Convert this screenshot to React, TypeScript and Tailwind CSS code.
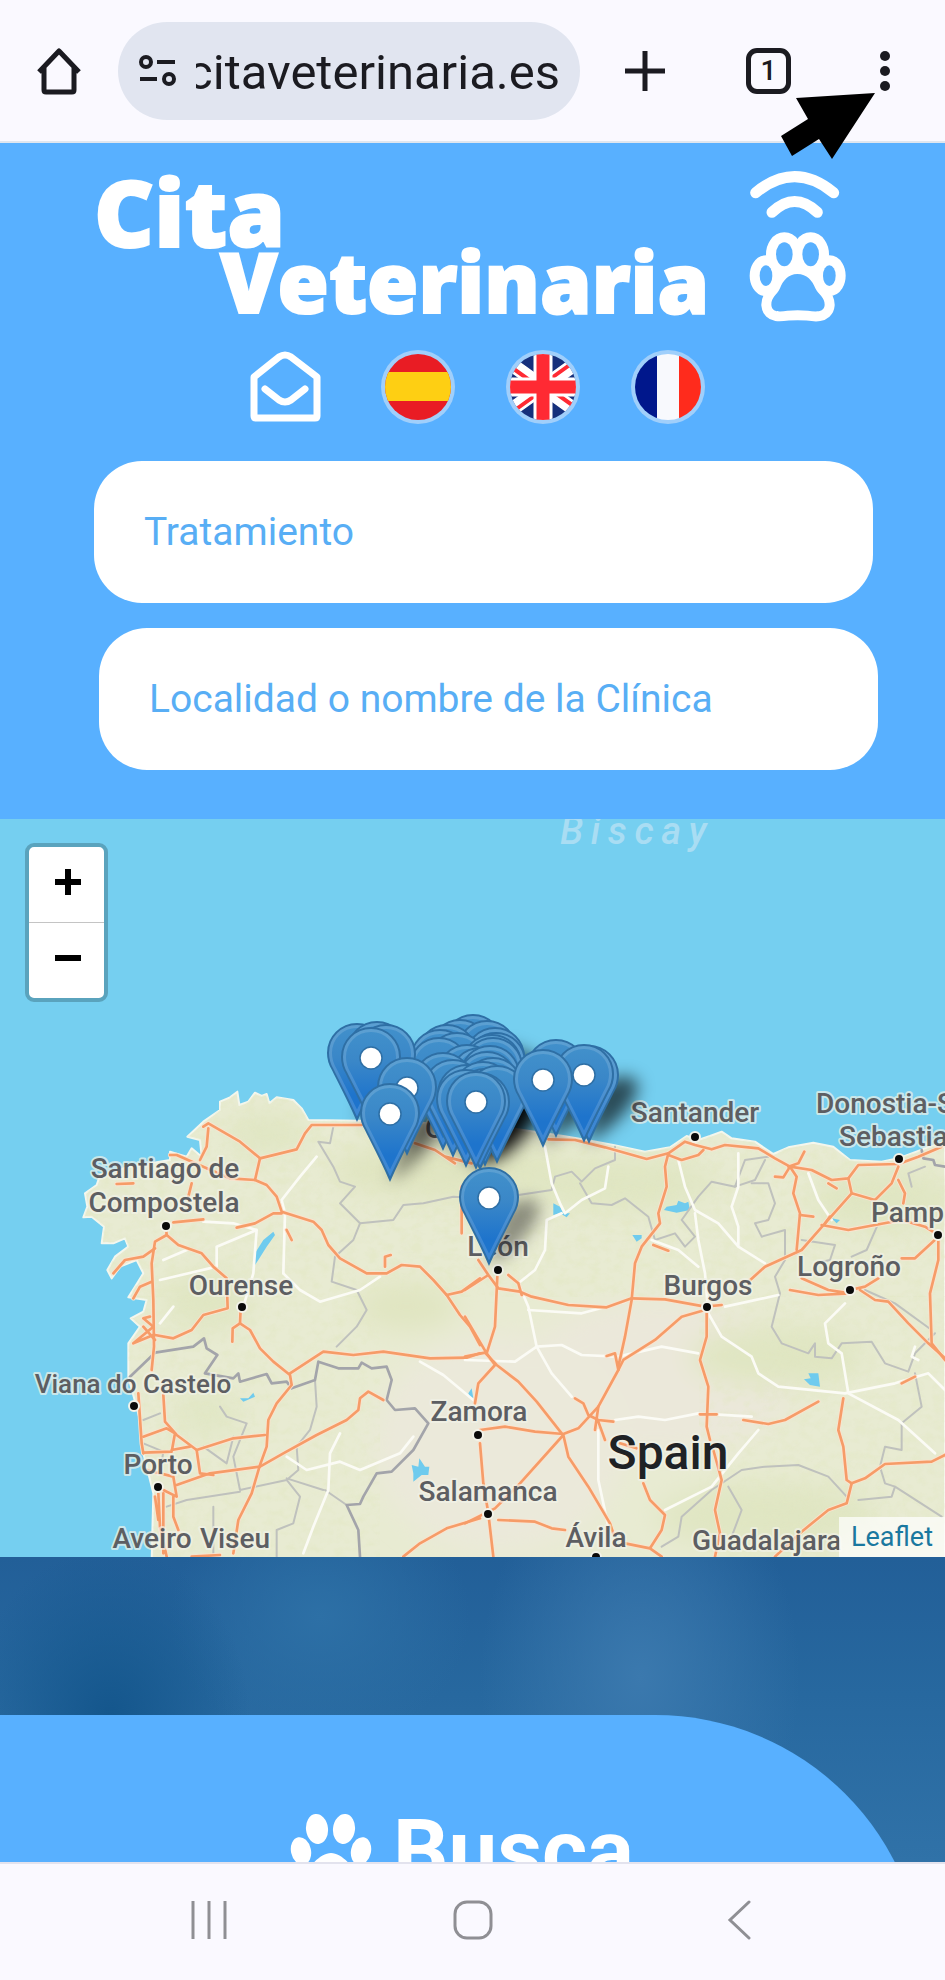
import type { ReactNode } from "react";

type Point = [number, number];

interface Town {
  name: string;
  x: number;
  y: number;
  anchor?: "start" | "middle";
}

const towns: Town[] = [
  { name: "Oviedo", x: 425, y: 319, anchor: "start" },
  { name: "Santiago de", x: 165, y: 359 },
  { name: "Compostela", x: 164, y: 393 },
  { name: "Ourense", x: 241, y: 476 },
  { name: "Porto", x: 158, y: 655 },
  { name: "Aveiro", x: 152, y: 729 },
  { name: "Viseu", x: 235, y: 729 },
  { name: "Santander", x: 695, y: 303 },
  { name: "Donostia-S", x: 816, y: 294, anchor: "start" },
  { name: "Sebastia", x: 839, y: 327, anchor: "start" },
  { name: "Pamp", x: 871, y: 403, anchor: "start" },
  { name: "Logroño", x: 849, y: 457 },
  { name: "Burgos", x: 708, y: 476 },
  { name: "León", x: 498, y: 437 },
  { name: "Zamora", x: 479, y: 602 },
  { name: "Salamanca", x: 488, y: 682 },
  { name: "Ávila", x: 596, y: 728 },
  { name: "Guadalajara", x: 692, y: 731, anchor: "start" },
];

const townDots: Point[] = [
  [166, 407], [242, 488], [134, 587], [158, 668], [695, 318], [899, 340],
  [938, 416], [850, 471], [707, 488], [498, 451], [478, 616], [488, 695],
  [596, 738],
];

// tips of the clinic markers, back to front
const pins: Point[] = [
  [473, 293], [460, 298], [487, 299], [447, 303], [495, 306], [440, 308],
  [496, 311], [457, 311], [492, 313], [439, 316], [493, 316], [467, 323],
  [480, 326], [490, 324], [443, 331], [487, 330], [493, 336], [453, 338],
  [467, 343], [483, 340], [485, 347], [466, 348], [497, 344], [480, 351],
  [476, 350],
  [357, 302], [377, 300], [386, 303], [371, 306], [407, 336], [390, 362],
  [556, 318], [589, 324], [584, 323], [543, 328], [489, 446],
];

const LAND =
  "M455 1500 460 1300 430 1180 420 1080 385 950 385 850 420 800 392 775 430 755 440 720 385 712 405 680 430 640 410 600 360 620 335 655 322 630 345 590 385 560 375 535 340 550 305 550 312 500 275 470 250 472 262 440 255 400 290 375 300 345 390 320 510 300 510 275 560 290 575 265 605 290 600 240 562 230 610 185 660 150 660 125 690 112 712 95 718 135 745 125 765 98 785 108 800 102 808 130 830 112 880 120 905 145 925 180 1080 182 1300 190 1500 200 1690 228 1760 240 1840 255 1935 275 2010 262 2060 228 2095 240 2130 228 2165 215 2195 235 2265 245 2320 282 2365 262 2440 248 2500 260 2550 300 2645 305 2695 295 2775 265 2835 245 2835 1500Z";

const westOrange = [
  "M610 200 625 190 720 245 780 295 890 268 915 220 935 195 1085 195",
  "M780 295 765 360 690 355 620 325 530 285 510 285",
  "M625 205 620 260 600 300",
  "M765 360 800 375 830 410 845 455 940 485 965 510 985 555 1020 595 1100 640 1160 640 1205 615 1260 620 1300 660 1340 705 1385 695 1440 655",
  "M1340 705 1380 765 1410 800 1440 855",
  "M710 503 765 490 820 460 845 460",
  "M575 370 565 410M350 372 400 370M520 487 610 478",
  "M498 500 500 525 535 555 605 580 640 620 680 655 683 745 610 765 575 810 520 835 465 825",
  "M500 525 465 545 455 610 460 720 462 860 455 930",
  "M465 565 430 590 375 600 340 640M455 665 420 680 400 715M450 770 430 775 460 800 400 850 460 825M430 800 465 840",
  "M722 745 720 790 750 810 780 865 820 905 870 945 875 975 830 1030 805 1080 800 1160 780 1215 755 1300 715 1380 700 1480",
  "M720 790 698 805 697 845M860 510 875 540M1155 620 1155 590 1172 585",
  "M870 940 970 875 1060 885 1150 875 1290 895 1400 893 1440 880",
  "M1150 1020 1105 995 1080 1015 1075 1050 1040 1080 950 1125 850 1180 780 1220 630 1240 530 1275",
  "M415 1000 425 1150 430 1180M490 1005 495 1085 530 1125 590 1170 700 1135 795 1125",
  "M430 1130 500 1105 525 1120 515 1175 430 1178M590 1170 600 1240 640 1245M570 1160 515 1170",
  "M475 1300 480 1400 500 1490M465 1310 475 1380M490 1300 490 1480M520 1310 520 1370 535 1410M440 1230 520 1250 530 1310 490 1290M575 1490 660 1485",
  "M1210 1490 1260 1450 1340 1405 1440 1375",
];

const eastOrange = [
  "M-150 250 -90 270 -30 310M-10 380 -10 520M-60 290 20 310",
  "M250 238 330 240 420 262 545 297 610 280 660 245 690 255 740 268 780 255 880 265 930 295 975 320 1040 330 1100 360 1150 355 1180 315 1300 312 1360 290 1430 260",
  "M610 280 600 320 605 380 580 460 585 490 530 560 510 610 500 720 480 830 460 920",
  "M610 285 650 300 700 285 715 270M970 320 1000 310 1018 275M930 350 955 352 975 320 995 350 985 400 1005 460 995 570",
  "M1150 355 1160 400 1080 490 1045 530 1010 570 900 620 850 665M1160 400 1230 420 1280 370 1300 320M1300 360 1320 400 1315 430",
  "M1070 495 1150 510 1230 495 1310 480 1380 500 1420 525 1420 600 1395 700 1400 850 1440 900M1420 530 1350 595 1310 595",
  "M1005 465 1045 470M1090 370 1115 385M1095 470 1080 490",
  "M0 690 70 645 40 600M70 645 100 685 165 695 200 710 310 735 425 742 500 715 600 718 720 740",
  "M130 645 160 670 170 705M97 650 90 800 65 880 0 770M0 890 60 878 95 915 160 965 215 1025 290 1120",
  "M65 880 90 915 40 970 30 1030M45 1110 120 1100 210 1115 295 1122 340 1105 400 1040 460 930 475 900 570 840 650 770 720 750",
  "M295 1125 165 1270 90 1345 0 1390M295 1125 310 1190 370 1280 435 1390 445 1420",
  "M45 1150 55 1270 70 1360 85 1490M100 1380 210 1385 260 1405 300 1410M460 930 450 880 425 888",
  "M330 1015 355 1030 370 1065 400 1080 445 1085M400 1040 390 1110M400 1085 420 1140",
  "M725 760 725 830 705 900 730 980 725 1100 735 1140M705 1063 755 1063M745 1170 770 1260 750 1350 765 1420 750 1490",
  "M535 1270 555 1320 600 1365 590 1410 555 1465 480 1450M555 1465 590 1490M465 1150 515 1165",
  "M835 1080 910 1092 960 1080 1060 1025M1310 970 1350 950M1135 1015 1120 1110 1135 1160 1145 1260 1160 1270 1200 1255 1260 1212 1400 1205 1440 1185",
  "M1160 1270 1145 1330 1090 1350 1010 1415 930 1490M1185 690 1230 720 1270 725 1330 790 1390 850 1440 895",
  "M975 690 1060 705 1155 700 1090 690 1010 655M1155 690 1200 680 1240 655M565 555 610 572M720 740 770 735",
];

const westWhite = [
  "M950 290 900 350 845 420 855 460 850 640M770 510 650 560 650 620 480 660M610 485 700 490 770 510 760 640 730 740",
  "M490 600 560 570M850 640 900 690 960 725 1080 690 1140 650M1260 905 1330 945 1420 1020",
  "M1020 1120 990 1180 985 1290 940 1400 910 1480M860 1190 920 1230 1020 1205 1080 1230 1200 1180 1240 1130M480 790 520 740",
];

const eastWhite = [
  "M240 260 260 370 285 430 300 460 350 420 420 385 430 320M290 460 245 480 240 570 210 630 160 670 190 740 215 860 260 940 320 1010",
  "M640 300 660 380 690 450 760 490 820 560 900 610M820 280 820 380 800 440 820 500 820 560M690 460 700 540 720 640 730 760 770 830 860 890 880 940 940 980 1140 1000 1290 970 1390 940 1440 990",
  "M0 900 150 905 215 860 290 855 350 885 460 890 590 860 700 880M190 750 350 760 480 725M450 1080 520 1070 600 1080 700 1060 860 1070M1140 730 1080 790 1090 850 1130 880 1150 1000 1300 1080 1410 1180",
  "M780 740 940 705M600 1350 740 1280 820 1180 880 1110M400 1110 400 1260 430 1400M1350 860 1340 890 1360 900M1030 340 1060 420 1100 480M560 540 640 570 700 620",
];

const westGrey = [
  "M1000 200 990 250 955 245 1000 320 1020 365 1065 380 1020 430 1080 490 1060 540 1005 590 995 665 1070 690 1100 750 1070 800 1010 860",
  "M1080 490 1180 480 1210 435 1270 430 1360 410 1440 415",
  "M945 960 950 1040 930 1110 890 1160 895 1230 860 1260 720 1290 700 1190 740 1090 680 1070 660 1040M970 1290 860 1255M610 1160 680 1210 700 1130M975 1290 1040 1335M500 1340 560 1320 720 1295M640 1490 640 1340M830 1490 830 1410 880 1390 900 1310 860 1260M430 1080 480 1060M430 1150 490 1175 480 1240",
];

const eastGrey = [
  "M160 405 260 390 270 350 320 335 350 365 390 325 450 300 450 260M345 370 380 430 440 435 480 415 550 470 570 540 630 520 660 560 690 530 650 480 700 410 740 365 810 380 840 300 910 290M860 370 910 370 930 430 910 480 870 490 890 530 960 510 960 590 1000 580",
  "M810 380 870 360 900 300M960 600 930 650 945 700 920 800 950 850 1030 880 1050 850 1050 890 1100 895 1130 850 1220 845 1260 910 1330 935 1350 880 1410 820",
  "M1010 540 1110 555 1095 600 1050 610M1240 490 1205 570 1160 590M1200 690 1290 730 1400 810M1340 380 1330 340 1380 320M1350 940 1370 1040 1310 1090 1310 1170 1260 1160 1245 1220 1260 1270 1290 1280 1280 1310 1180 1320M1290 1280 1430 1370",
  "M590 1460 640 1430 650 1370 740 1290 830 1230 900 1220 1000 1215 1090 1250 1145 1310M790 1280 830 1350 800 1430",
];

const BORDER =
  "M390 950 465 878 580 860 612 835 620 865 652 885 615 940 700 955 715 940 720 965 800 942 815 970 860 965 875 985 945 960 955 905 1015 925 1075 925 1085 908 1115 925 1160 920 1175 960 1160 1020 1185 1050 1245 1045 1285 1090 1240 1170 1175 1235 1130 1240 1090 1310 1080 1332 1040 1335 1075 1410 1080 1490";

const LAKES =
  "M765 615 765 580 790 540 820 515 825 525 800 560 775 600ZM720 1015 745 1015 760 998 765 1010 730 1025ZM1240 1240 1235 1215 1255 1220 1258 1195 1275 1220 1288 1220 1285 1245 1265 1245 1240 1265ZM1405 1000 1415 985 1420 1015 1408 1010Z" +
  "M1992 450 2000 440 2030 435 2035 422 2055 430 2065 425 2070 450 2030 458ZM1897 525 1925 525 1925 535 1910 545ZM1660 430 1680 440 1690 460 1710 460 1700 472 1680 460 1660 465ZM2412 958 2432 955 2425 940 2455 940 2460 980 2430 975ZM2495 475 2520 480 2510 490Z";

const RoadGroup = ({
  paths,
  stroke,
  width,
}: {
  paths: string[];
  stroke: string;
  width: number;
}) => (
  <g
    fill="none"
    stroke={stroke}
    strokeWidth={width}
    strokeLinejoin="round"
    strokeLinecap="round"
  >
    {paths.map((d) => (
      <path key={d} d={d} />
    ))}
  </g>
);

const ClinicMap = () => (
  <svg
    className="block w-full h-[738px]"
    viewBox="0 0 945 738"
    preserveAspectRatio="xMidYMid slice"
    role="img"
    aria-label="Mapa de clínicas"
  >
    <defs>
      <linearGradient id="pinFill" x1="0" y1="0" x2="0" y2="1">
        <stop offset="0" stopColor="#4291cb" />
        <stop offset="0.35" stopColor="#3a87c8" />
        <stop offset="0.75" stopColor="#1e74cc" />
      </linearGradient>
      <filter id="soft" x="-50%" y="-50%" width="200%" height="200%">
        <feGaussianBlur stdDeviation="8" />
      </filter>
      <filter id="haze" x="-50%" y="-50%" width="200%" height="200%">
        <feGaussianBlur stdDeviation="40" />
      </filter>
      <filter id="relief" x="0" y="0" width="100%" height="100%">
        <feTurbulence type="fractalNoise" baseFrequency="0.03 0.04" numOctaves="3" seed="4" />
        <feColorMatrix values="0 0 0 0 0.76  0 0 0 0 0.8  0 0 0 0 0.54  3 0 0 0 -1.3" />
      </filter>
      <clipPath id="landClip">
        <path d={LAND} />
      </clipPath>
      <g id="pin">
        <path
          d="M0-1.5C-8-20-17-37-24.500-52-27.500-57-29-62.500-29-68-29-84-16-97-0-97 16-97 29-84 29-68 29-62.500 27.500-57 24.500-52 17-37 8-20 0-1.500Z"
          fill="url(#pinFill)"
          stroke="#2e6fa5"
          strokeWidth="2"
        />
        <path
          d="M0-8C-7-23-15-38-22-52-25-57-26.500-63-26.500-68-26.500-83-15-94.500 0-94.500 15-94.500 26.500-83 26.500-68 26.500-63 25-57 22-52 15-38 7-23 0-8Z"
          fill="none"
          stroke="#fff"
          strokeOpacity="0.14"
          strokeWidth="3"
        />
        <circle cy="-67" r="11" fill="#fff" stroke="#2e6fa5" strokeWidth="1.500" />
      </g>
      <path
        id="pinShadow"
        d="M0 0 14-50C24-66 44-72 50-60 54-46 30-16 0 0Z"
        fill="#000"
        fillOpacity="0.4"
      />
    </defs>

    <rect width="945" height="738" fill="#75cff0" />
    <g transform="translate(0 241) scale(0.33333)">
      <path d={LAND} fill="#e8ebd2" stroke="#f4f7ee" strokeWidth="6" strokeLinejoin="round" />
      <g clipPath="url(#landClip)">
        <g filter="url(#haze)">
          <ellipse cx="1980" cy="950" rx="420" ry="230" fill="#ebe8da" />
          <ellipse cx="1500" cy="1150" rx="380" ry="330" fill="#ebe9da" />
          <ellipse cx="1350" cy="330" rx="360" ry="90" fill="#e0e5c1" />
          <ellipse cx="1220" cy="740" rx="150" ry="70" fill="#e0e5c1" />
          <ellipse cx="1850" cy="370" rx="300" ry="80" fill="#e0e6c3" />
          <ellipse cx="2330" cy="890" rx="260" ry="90" fill="#e0e6c2" />
          <ellipse cx="2650" cy="420" rx="220" ry="90" fill="#e0e6c3" />
          <ellipse cx="2300" cy="1370" rx="330" ry="100" fill="#e0e6c3" />
          <ellipse cx="620" cy="720" rx="130" ry="90" fill="#e0e6c3" />
          <ellipse cx="620" cy="1060" rx="100" ry="70" fill="#e1e7c6" />
          <ellipse cx="800" cy="220" rx="120" ry="60" fill="#e0e6c3" />
        </g>
        <rect x="240" y="90" width="2600" height="620" filter="url(#relief)" opacity="0.45" />
        <rect x="240" y="710" width="900" height="800" filter="url(#relief)" opacity="0.4" />
        <rect x="2100" y="710" width="740" height="800" filter="url(#relief)" opacity="0.35" />
      </g>
      <path d={LAKES} fill="#6fcbee" />
      <RoadGroup paths={westGrey} stroke="#bfc1bd" width={6} />
      <RoadGroup paths={[BORDER]} stroke="#a3a4aa" width={8} />
      <RoadGroup paths={westWhite} stroke="#fbfbf5" width={8} />
      <RoadGroup paths={westOrange} stroke="#fbe3cf" width={13} />
      <g transform="translate(1395 0)">
        <RoadGroup paths={eastGrey} stroke="#bfc1bd" width={6} />
        <RoadGroup paths={["M1370 270 1375 295 1405 300 1410 315 1440 320"]} stroke="#a3a4aa" width={8} />
        <RoadGroup paths={eastWhite} stroke="#fbfbf5" width={8} />
        <RoadGroup paths={eastOrange} stroke="#fbe3cf" width={13} />
        <RoadGroup paths={eastOrange} stroke="#f69c68" width={8} />
      </g>
      <RoadGroup paths={westOrange} stroke="#f69c68" width={8} />
    </g>

    <text
      x="560"
      y="25"
      className="font-[Roboto,sans-serif] text-[38px] font-medium italic tracking-[0.2em] fill-[#a9ddf3]"
    >
      Biscay
    </text>
    {townDots.map(([x, y]) => (
      <circle key={`${x}-${y}`} cx={x} cy={y} r="5" fill="#0a0a0a" stroke="#f3f3ea" strokeWidth="2" />
    ))}
    <g
      className="font-[Roboto,sans-serif] text-[28px] font-medium fill-[#5d5e62]"
      stroke="#f1f2e8"
      strokeOpacity="0.7"
      strokeWidth="4"
      strokeLinejoin="round"
      paintOrder="stroke"
    >
      {towns.map(({ name, x, y, anchor = "middle" }) => (
        <text key={name} x={x} y={y} textAnchor={anchor}>
          {name}
        </text>
      ))}
      <text x="133" y="574" textAnchor="middle" className="text-[26px]">
        Viana do Castelo
      </text>
      <text
        x="668"
        y="650"
        textAnchor="middle"
        className="text-[48px] fill-[#1f2225]"
      >
        Spain
      </text>
    </g>

    <g filter="url(#soft)">
      {pins.map(([x, y]) => (
        <use key={`${x}-${y}`} href="#pinShadow" x={x} y={y} />
      ))}
    </g>
    {pins.map(([x, y]) => (
      <use key={`${x}-${y}`} href="#pin" x={x} y={y} />
    ))}
  </svg>
);

const BrowserBar = () => (
  <header className="relative flex items-center h-[143px] pl-[36px] pr-[37px] bg-[#faf9ff] border-b-2 border-[#dfe6ef] text-[#1b1b21]">
    <button type="button" aria-label="Inicio" className="shrink-0">
      <svg className="w-[46px] h-[48px]" viewBox="0 0 46 48" fill="none" stroke="currentColor" strokeWidth="5" strokeLinejoin="round">
        <path d="M3 25 23 4 43 25M8 21V43Q8 45 10 45H36Q38 45 38 43V21" />
      </svg>
    </button>
    <div className="flex items-center flex-1 min-w-0 h-[98px] ml-[36px] px-[20px] gap-[19px] rounded-full bg-[#e1e5f0]">
      <svg className="shrink-0 w-[39px] h-[34px]" viewBox="0 0 39 34" fill="none" stroke="currentColor" strokeWidth="4">
        <circle cx="8" cy="8" r="5" />
        <path d="M19 8H37M2 25H19" />
        <circle cx="31" cy="25" r="5" />
      </svg>
      <div className="flex flex-1 min-w-0 justify-end pt-[4px] overflow-hidden">
        <input
          aria-label="Dirección"
          defaultValue="citaveterinaria.es"
          className="w-[390px] shrink-0 bg-transparent outline-none text-right text-[49px] leading-[60px]"
        />
      </div>
    </div>
    <div className="flex items-center justify-between shrink-0 w-[328px] pl-[45px]">
      <button type="button" aria-label="Nueva pestaña">
        <svg className="w-[40px] h-[40px]" viewBox="0 0 40 40" stroke="currentColor" strokeWidth="5">
          <path d="M20 0V40M0 20H40" />
        </svg>
      </button>
      <button
        type="button"
        aria-label="Pestañas"
        className="flex items-center justify-center w-[45px] h-[46px] ml-[10px] rounded-[11px] border-[5px] border-current text-[28px] font-medium"
      >
        1
      </button>
      <button type="button" aria-label="Menú" className="px-[17px]">
        <svg className="w-[12px] h-[42px]" viewBox="0 0 12 42" fill="currentColor">
          <circle cx="6" cy="6" r="5" />
          <circle cx="6" cy="21" r="5" />
          <circle cx="6" cy="36" r="5" />
        </svg>
      </button>
    </div>
    <svg className="absolute right-[69px] top-[92px] z-10 w-[96px] h-[68px]" viewBox="781 92 96 68">
      <path d="M876 93 797 98 809 119 782 136 793 156 820 139 833 159Z" fill="#000" />
    </svg>
  </header>
);

const Flag = ({ label, children }: { label: string; children: ReactNode }) => (
  <button type="button" aria-label={label}>
    <svg className="w-[76px] h-[76px]" viewBox="-38 -38 76 76">
      <circle r="37" fill="#a0cffb" />
      <g clipPath="url(#flagClip)">{children}</g>
    </svg>
  </button>
);

const Languages = () => (
  <div className="flex items-center ml-[248px] mt-[26px] h-[76px]">
    <svg className="absolute w-0 h-0">
      <clipPath id="flagClip">
        <circle r="33" />
      </clipPath>
    </svg>
    <a href="#contacto" aria-label="Contacto" className="mr-[57px]">
      <svg className="w-[75px] h-[76px]" viewBox="0 0 75 76" fill="none" stroke="#fff" strokeWidth="7" strokeLinejoin="round" strokeLinecap="round">
        <path d="M6 28 31 8Q37 4 43 8L69 28V67Q69 69 67 69H8Q6 69 6 67Z" />
        <path d="M17 40 31 51Q37 55 43 51L57 40" />
      </svg>
    </a>
    <div className="flex gap-[49px]">
      <Flag label="Español">
        <rect x="-33" y="-33" width="66" height="66" fill="#e91c24" />
        <rect x="-33" y="-15" width="66" height="29" fill="#fecf13" />
      </Flag>
      <Flag label="English">
        <rect x="-33" y="-33" width="66" height="66" fill="#16307c" />
        <path d="M-46-33 46 33M46-33-46 33" stroke="#fff" strokeWidth="14" />
        <path d="M-46-30-4 0M46 30 4 0M-46 36 4 0M46-36-4 0" stroke="#ff2a33" strokeWidth="4" />
        <path d="M0-33V33M-33 0H33" stroke="#fff" strokeWidth="19" />
        <path d="M0-33V33M-33 0H33" stroke="#ff2a33" strokeWidth="13" />
      </Flag>
      <Flag label="Français">
        <rect x="-33" y="-33" width="22" height="66" fill="#00178c" />
        <rect x="-11" y="-33" width="22" height="66" fill="#f8f9fd" />
        <rect x="11" y="-33" width="22" height="66" fill="#ff2b1c" />
      </Flag>
    </div>
  </div>
);

const PAD =
  "M175 342C148 342 132 362 123 385 115 404 96 412 97 435 99 459 125 455 145 452Q176 449 207 452C227 455 255 459 257 435 258 412 238 404 229 385 220 362 204 342 175 342Z";

const PawShapes = () => (
  <>
    <ellipse cx="136" cy="283" rx="25" ry="36" />
    <ellipse cx="215" cy="283" rx="25" ry="36" />
    <ellipse cx="81" cy="347" rx="19" ry="31" />
    <ellipse cx="271" cy="347" rx="19" ry="31" />
    <path d={PAD} />
  </>
);

const Logo = () => (
  <div className="flex pt-[26px] pl-[94px]">
    <h1 className="w-[655px] font-['Open_Sans',sans-serif] font-extrabold text-white whitespace-nowrap [-webkit-text-stroke:2px_white]">
      <span className="block text-[93px] leading-[84px]">Cita</span>
      <span className="block pl-[126px] text-[83px] leading-[56px]">Veterinaria</span>
    </h1>
    <svg className="w-[98px] h-[154px]" viewBox="30 27 294 462" fill="none">
      <g stroke="#fff" strokeWidth="33" strokeLinecap="round">
        <path d="M50 98Q167 2 284 98" />
        <path d="M99 157Q167 92 235 157" />
      </g>
      <g stroke="#fff" strokeWidth="60" strokeLinejoin="round">
        <PawShapes />
      </g>
      <g fill="#58b0ff">
        <PawShapes />
      </g>
    </svg>
  </div>
);

const searchInput =
  "block h-[142px] px-[50px] rounded-[48px] bg-white outline-none text-[39px] text-[#58aef5] placeholder:text-[#58aef5] placeholder:opacity-100";

const App = () => (
  <div className="font-[Roboto,sans-serif] bg-[#faf9ff] overflow-hidden">
    <BrowserBar />

    <section className="h-[676px] bg-[#58b0ff]">
      <Logo />
      <Languages />
      <form className="mt-[36px] pl-[94px] pr-[67px] space-y-[25px]">
        <input aria-label="Tratamiento" placeholder="Tratamiento" className={`${searchInput} w-[calc(100%-5px)]`} />
        <input
          aria-label="Localidad o nombre de la Clínica"
          placeholder="Localidad o nombre de la Clínica"
          className={`${searchInput} ml-[5px] w-[calc(100%-5px)]`}
        />
      </form>
    </section>

    <section className="relative">
      <ClinicMap />
      <div className="absolute left-[25px] top-[24px] flex flex-col rounded-[9px] border-[4px] border-[#5aa3bd] bg-white overflow-hidden">
        <button type="button" aria-label="Acercar" className="flex items-center justify-center w-[75px] h-[76px] border-b border-[#c4c4c4] pb-[6px] pl-[3px]">
          <svg className="w-[28px] h-[28px]" viewBox="0 0 28 28" stroke="#000" strokeWidth="6">
            <path d="M14 1V27M1 14H27" />
          </svg>
        </button>
        <button type="button" aria-label="Alejar" className="flex items-center justify-center w-[75px] h-[75px] pb-[6px] pl-[3px]">
          <svg className="w-[28px] h-[28px]" viewBox="0 0 28 28" stroke="#000" strokeWidth="6">
            <path d="M1 14H27" />
          </svg>
        </button>
      </div>
      <a
        href="#leaflet"
        className="absolute right-0 bottom-0 px-[12px] bg-white/70 text-[27px] leading-[40px] text-[#1a789f]"
      >
        Leaflet
      </a>
    </section>

    <section className="h-[305px] pt-[158px] overflow-hidden bg-[radial-gradient(ellipse_140px_170px_at_110px_160px,#14568c_0%,transparent_100%),radial-gradient(ellipse_160px_220px_at_640px_120px,#3b79ae_0%,transparent_100%),radial-gradient(ellipse_150px_130px_at_320px_60px,#2d70a6_0%,transparent_100%),linear-gradient(180deg,#225f98_0%,#27689f_45%,#3072a8_100%)]">
      <div className="flex justify-center gap-[21px] h-[300px] mr-[21px] pt-[98px] rounded-tr-[269px] bg-[#58b0ff] text-white">
        <svg className="w-[82px] h-[82px]" viewBox="0 0 82 82" fill="currentColor">
          <ellipse cx="27" cy="16" rx="11" ry="15" transform="rotate(-7 27 16)" />
          <ellipse cx="54" cy="16" rx="11" ry="15" transform="rotate(7 54 16)" />
          <ellipse cx="11" cy="38" rx="10" ry="14" transform="rotate(-12 11 38)" />
          <ellipse cx="71" cy="38" rx="10" ry="14" transform="rotate(12 71 38)" />
          <path d="M41 40C30 40 15 56 15 68 15 82 32 76 41 76S67 82 67 68C67 56 52 40 41 40Z" />
        </svg>
        <h2 className="text-[87px] leading-[76px] font-bold">Busca</h2>
      </div>
    </section>

    <nav className="flex items-center h-[118px] pl-[191px] pr-[194px] pb-[4px] justify-between border-t-2 border-[#e3e3ee] bg-[#faf9ff]">
      <button type="button" aria-label="Recientes">
        <svg className="w-[36px] h-[40px]" viewBox="0 0 36 40" stroke="#8f8f94" strokeWidth="3">
          <path d="M2 1V39M18 1V39M34 1V39" />
        </svg>
      </button>
      <button type="button" aria-label="Inicio del sistema">
        <svg className="w-[40px] h-[40px]" viewBox="0 0 40 40" fill="none" stroke="#8f8f94" strokeWidth="3">
          <rect x="2" y="2" width="36" height="36" rx="12" />
        </svg>
      </button>
      <button type="button" aria-label="Atrás" className="pl-[8px]">
        <svg className="w-[24px] h-[40px]" viewBox="0 0 24 40" fill="none" stroke="#8f8f94" strokeWidth="3" strokeLinecap="round">
          <path d="M22 2 3 20 22 38" />
        </svg>
      </button>
    </nav>
  </div>
);

export default App;
